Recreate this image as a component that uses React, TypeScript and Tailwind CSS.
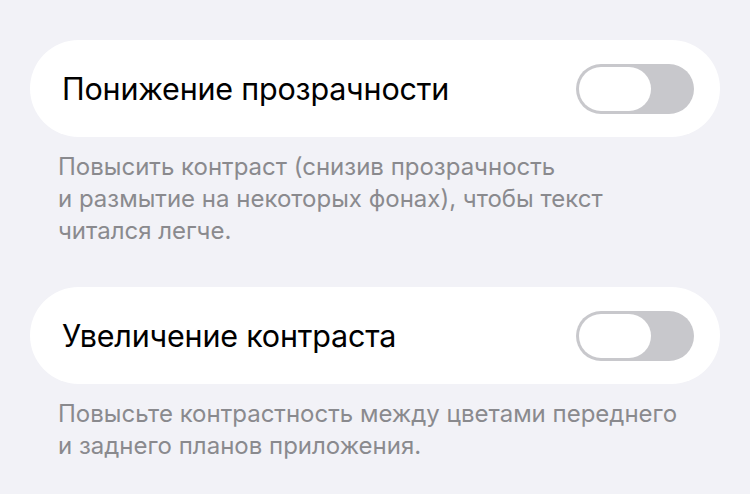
function Toggle() {
  return (
    <div className="w-[118px] h-[50px] rounded-full bg-[#c8c8cc] p-[3px] flex items-center">
      <div className="w-[72px] h-[44px] rounded-full bg-white" />
    </div>
  )
}

function Row({ title }: { title: string }) {
  return (
    <div className="h-[97px] rounded-full bg-white flex items-center justify-between pl-[32px] pr-[26px]">
      <span className="text-[30.5px] text-black tracking-[-0.2px]">{title}</span>
      <Toggle />
    </div>
  )
}

export default function App() {
  return (
    <div className="min-h-screen bg-[#f2f2f7] px-[30px] pt-[40px] font-['Inter',sans-serif]">
      <Row title="Понижение прозрачности" />
      <p className="pl-[28px] pt-[14px] text-[24px] leading-[32px] text-[#8a8a8e]">
        Повысить контраст (снизив прозрачность
        <br />
        и размытие на некоторых фонах), чтобы текст
        <br />
        читался легче.
      </p>
      <div className="mt-[40px]">
        <Row title="Увеличение контраста" />
      </div>
      <p className="pl-[28px] pt-[14px] text-[24px] leading-[32px] text-[#8a8a8e]">
        Повысьте контрастность между цветами переднего
        <br />
        и заднего планов приложения.
      </p>
    </div>
  )
}
